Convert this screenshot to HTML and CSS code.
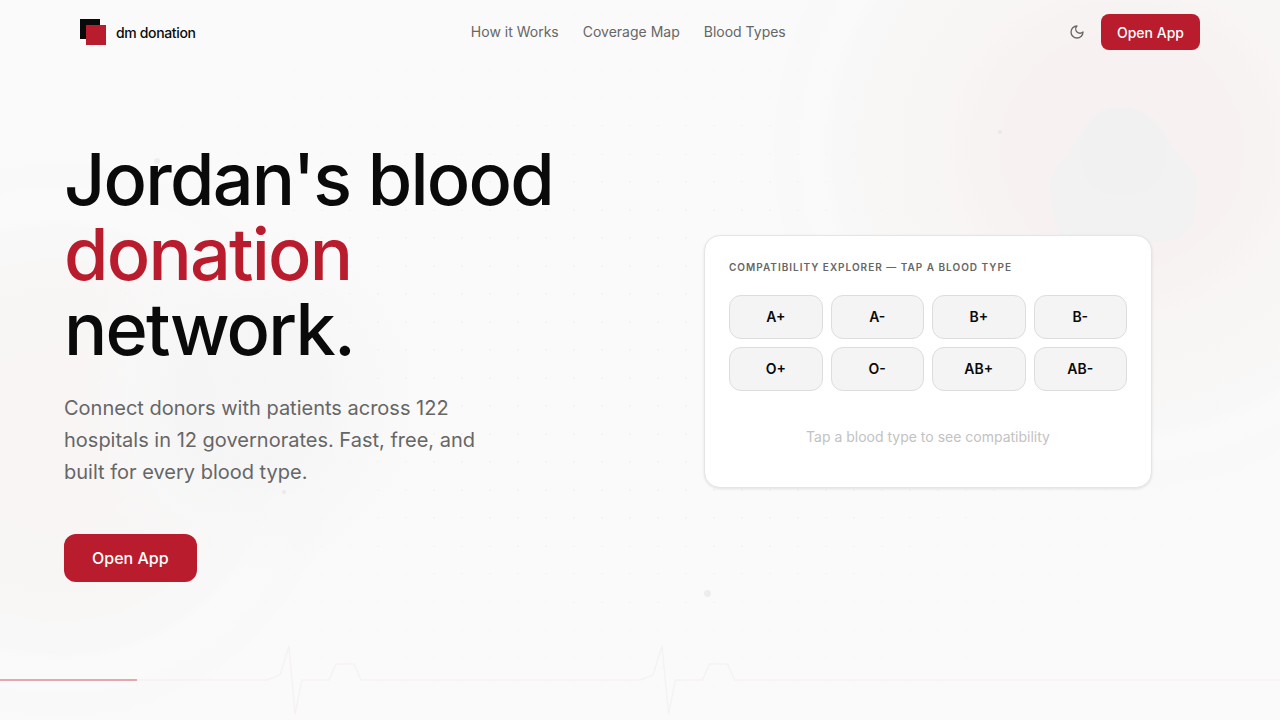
FILE: index.html
```html
<!DOCTYPE html>
<html lang="en">
<head>
<meta charset="utf-8">
<meta name="viewport" content="width=device-width, initial-scale=1">
<title>dm donation</title>
<link rel="stylesheet" href="styles.css">
</head>
<body>
<div class="page">
  <div class="backdrop" aria-hidden="true">
    <div class="glow glow-right"></div>
    <div class="glow glow-left"></div>
    <div class="glow glow-gray"></div>
    <div class="dots"></div>
    <svg class="drop" viewBox="0 0 150 150"><path d="M71 0C96 0 109 16 120 36C130 54 146 62 147 80C147 104 144 132 118 135L20 145C6 130 0 100 0 82C0 64 17 54 25 36C35 16 46 0 71 0Z" fill="#f3f2f2"/><path d="M71 2C93 2 106 17 117 36C120 68 104 90 71 90C42 90 28 68 30 36C39 17 49 2 71 2Z" fill="#f2f1f1"/></svg>
    <span class="speck speck-a"></span>
    <span class="speck speck-b"></span>
    <span class="speck speck-c"></span>
    <span class="speck speck-d"></span>
    <svg class="pulse" viewBox="0 0 1280 80" preserveAspectRatio="none" fill="none">
      <path d="M0 40H267L280 35L289 6L295 74L302 40H329L336 24H354L361 40H640L653 35L662 6L668.500 74L675.500 40H702.500L709.500 24H727.500L734.500 40H1280" stroke="#f7f2f2" stroke-width="1.500"/>
      <path d="M0 40H137" stroke="#e3a8ae" stroke-width="2"/>
    </svg>
  </div>

  <header class="nav">
    <a class="brand" href="#">
      <svg class="logo" viewBox="0 0 26 26"><rect width="20" height="20" fill="#0a0a0a"/><rect x="6" y="6" width="20" height="20" fill="#b91c2c"/></svg>
      <span>dm donation</span>
    </a>
    <nav class="links">
      <a href="#how">How it Works</a>
      <a href="#map">Coverage Map</a>
      <a href="#types">Blood Types</a>
    </nav>
    <div class="actions">
      <button class="theme" type="button" aria-label="Toggle dark mode">
        <svg viewBox="0 0 24 24" fill="none" stroke="currentColor" stroke-width="2" stroke-linecap="round" stroke-linejoin="round"><path d="M12 3a6 6 0 0 0 9 9 9 9 0 1 1-9-9Z"/></svg>
      </button>
      <a class="button button-small" href="#app">Open App</a>
    </div>
  </header>

  <main class="hero">
    <section class="intro">
      <h1>Jordan's blood <span class="accent">donation</span> network.</h1>
      <p>Connect donors with patients across 122 hospitals in 12 governorates. Fast, free, and built for every blood type.</p>
      <a class="button button-large" href="#app">Open App</a>
    </section>
    <section class="explorer" aria-labelledby="explorer-title">
      <h2 id="explorer-title">Compatibility Explorer — Tap a blood type</h2>
      <div class="types">
        <button type="button">A+</button>
        <button type="button">A-</button>
        <button type="button">B+</button>
        <button type="button">B-</button>
        <button type="button">O+</button>
        <button type="button">O-</button>
        <button type="button">AB+</button>
        <button type="button">AB-</button>
      </div>
      <p class="hint">Tap a blood type to see compatibility</p>
    </section>
  </main>
</div>
</body>
</html>
```
FILE: styles.css
```css
* { box-sizing: border-box; }

body {
  margin: 0;
  background: #fafafa;
  color: #0a0a0a;
  font-family: Inter, "Liberation Sans", sans-serif;
  -webkit-font-smoothing: antialiased;
}

a { color: inherit; text-decoration: none; }
button { font-family: inherit; cursor: pointer; }

.page {
  position: relative;
  min-height: 100vh;
  display: flex;
  flex-direction: column;
  overflow: hidden;
}

/* Decorative layer */
.backdrop { position: absolute; inset: 0; pointer-events: none; }
.dots {
  position: absolute;
  inset: 0;
  background-image: radial-gradient(circle, #f4f4f4 1px, transparent 1px);
  background-size: 28px 28px;
  -webkit-mask-image: radial-gradient(ellipse at center, #000 30%, transparent 75%);
  mask-image: radial-gradient(ellipse at center, #000 30%, transparent 75%);
}
.glow { position: absolute; border-radius: 50%; }
.glow-right {
  width: 700px;
  height: 680px;
  top: -190px;
  right: -192px;
  background: radial-gradient(closest-side, #f7f1f1 0 34%, #f8f3f3 36% 42%, #f8f5f4 50%, #f8f6f5 52% 60%, #f8f7f6 70%, #f8f8f8 82%, #fafafa 86% 90%, #f9f9f9 94% 99%, #fafafa 100%);
}
.glow-left {
  width: 560px;
  height: 560px;
  left: -220px;
  top: 160px;
  background: radial-gradient(closest-side, #f8f5f4 0 28%, #f8f6f5 34% 50%, #f9f7f6 64%, #f8f8f8 66% 76%, #fafafa 79% 88%, #f9f9f9 93% 98%, #fafafa 100%);
}
.glow-gray {
  width: 360px;
  height: 380px;
  left: 72px;
  top: 210px;
  background: radial-gradient(closest-side, #f6f5f6 0 40%, #f7f7f7 55%, #f8f8f8 70%, rgba(249, 249, 249, 0) 100%);
  opacity: .8;
}
.drop { position: absolute; width: 150px; right: 80px; top: 106px; }
.speck { position: absolute; width: 4px; height: 4px; border-radius: 50%; background: #ebe8e9; }
.speck-a { left: 12%; top: 158px; width: 6px; height: 6px; background: #f0eeef; }
.speck-b { left: 78%; top: 130px; }
.speck-c { left: 22%; top: 490px; }
.speck-d { left: 55%; top: 590px; width: 7px; height: 7px; background: #eeedee; }
.pulse { position: absolute; left: 0; bottom: 0; width: 100%; height: 80px; }

/* Navigation */
.nav {
  position: relative;
  width: 100%;
  max-width: 1280px;
  margin: 0 auto;
  height: 64px;
  padding: 0 80px;
  display: flex;
  justify-content: space-between;
  align-items: center;
}
.brand { display: flex; align-items: center; gap: 10px; font-size: 14px; font-weight: 500; letter-spacing: -0.025em; }
.logo { width: 26px; height: 26px; }
.links { display: flex; gap: 24px; font-size: 14px; line-height: 20px; color: #666; }
.actions { display: flex; align-items: center; gap: 8px; }
.theme {
  width: 32px;
  height: 32px;
  padding: 0;
  border: 0;
  background: none;
  color: #666;
  display: grid;
  place-items: center;
}
.theme svg { width: 16px; height: 16px; }
.button {
  display: inline-flex;
  align-items: center;
  justify-content: center;
  background: #b91c2c;
  color: #fff;
  font-weight: 500;
}
.button-small { height: 36px; padding: 0 16px; border-radius: 8px; font-size: 14px; }
.button-large { height: 48px; padding: 0 28px; border-radius: 12px; font-size: 16px; }

/* Hero */
.hero {
  position: relative;
  flex: 1;
  width: 100%;
  max-width: 1280px;
  margin: 0 auto;
  padding: 0 128px 62px 64px;
  display: grid;
  grid-template-columns: minmax(0, 576px) minmax(0, 448px);
  justify-content: space-between;
  align-items: center;
}
h1 {
  margin: 0;
  font-size: 72px;
  line-height: 75px;
  font-weight: 500;
  letter-spacing: -0.025em;
}
.accent { display: block; color: #b91c2c; }
.intro p {
  margin: 26px 0 46px;
  max-width: 440px;
  font-size: 20px;
  line-height: 32px;
  color: #666;
}
.explorer {
  background: #fff;
  border: 1px solid #e5e5e5;
  border-radius: 16px;
  box-shadow: 0 1px 3px rgba(0, 0, 0, .1);
  padding: 24px;
}
h2 {
  margin: 0 0 20px;
  font-size: 10px;
  line-height: 15px;
  font-weight: 600;
  letter-spacing: 0.1em;
  text-transform: uppercase;
  color: #666;
}
.types { display: grid; grid-template-columns: repeat(4, 1fr); gap: 8px; }
.types button {
  height: 44px;
  padding: 0;
  border: 1px solid #ddd;
  border-radius: 12px;
  background: #f4f4f4;
  color: #0a0a0a;
  font-size: 14px;
  font-weight: 600;
}
.hint {
  margin: 16px 0 0;
  padding: 20px 0 16px;
  font-size: 14px;
  line-height: 20px;
  text-align: center;
  color: #c2c2c2;
}
```
